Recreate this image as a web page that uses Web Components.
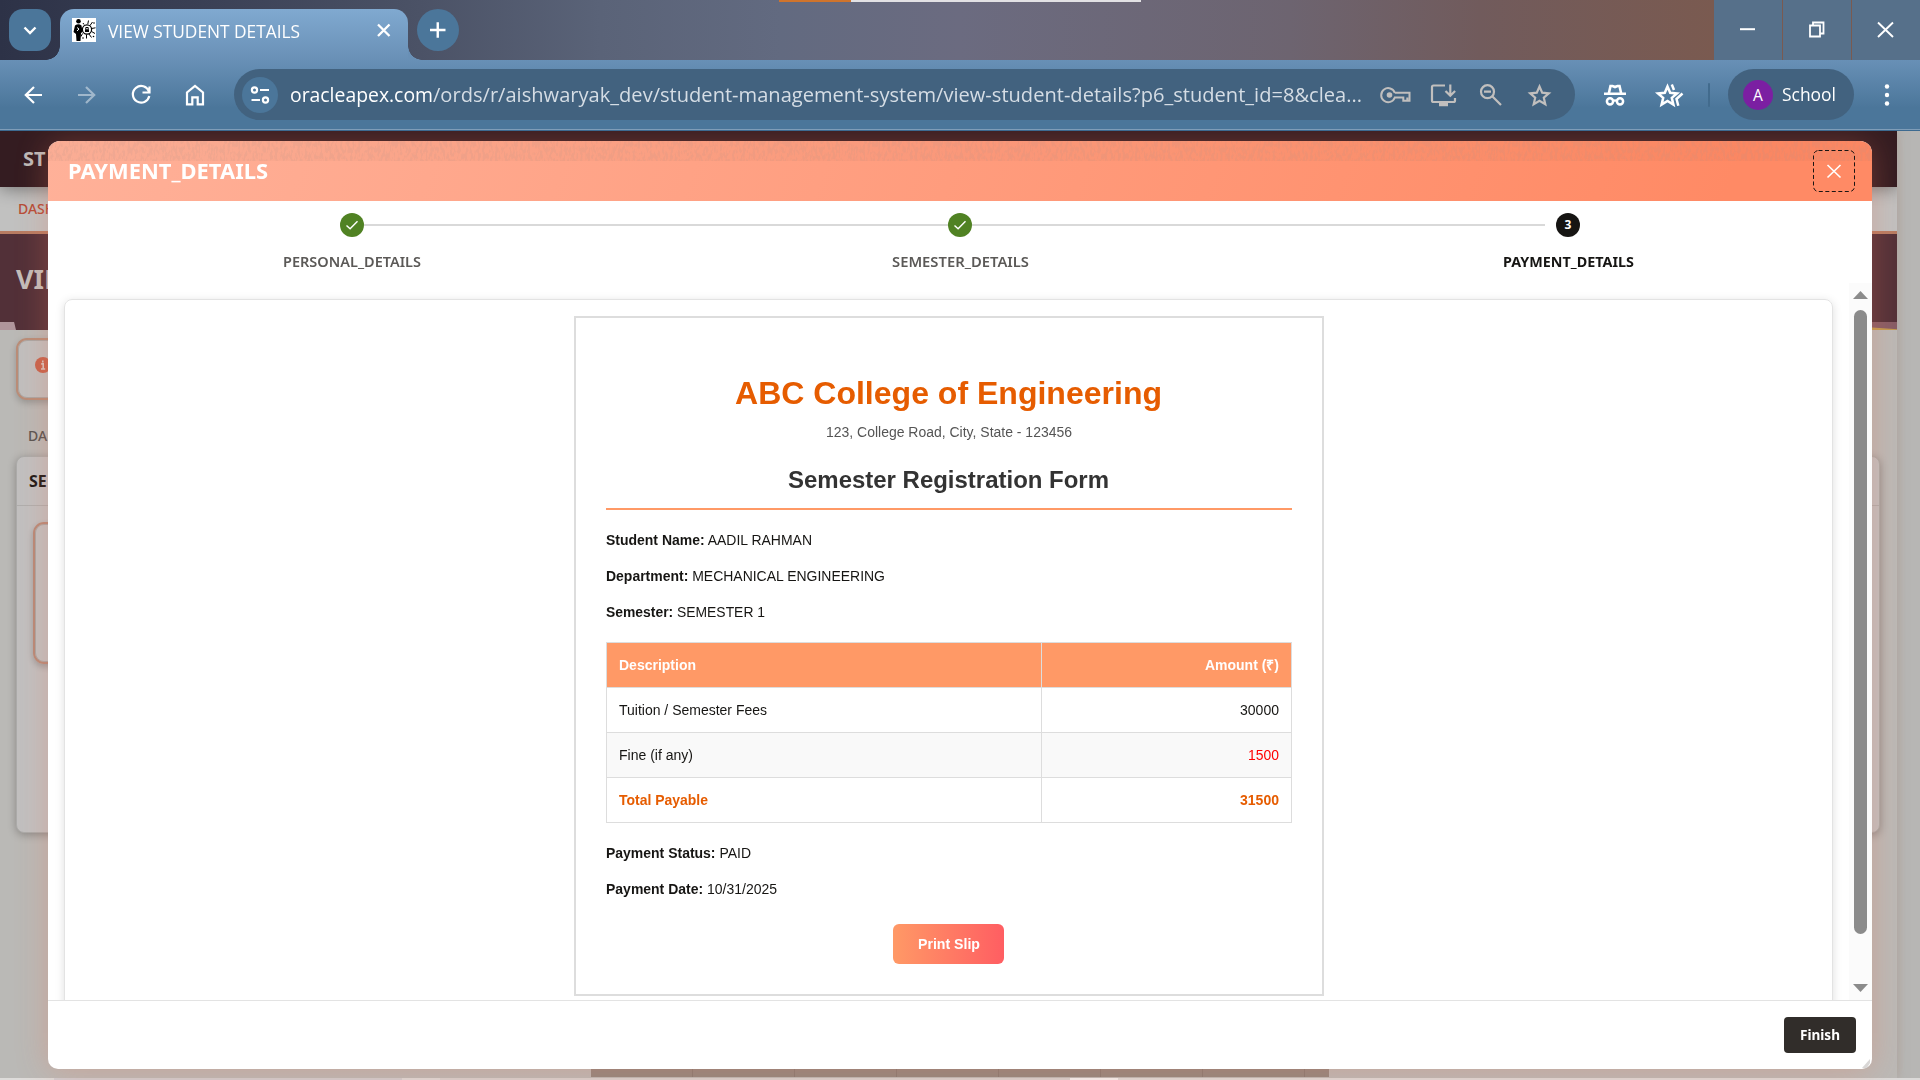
<!DOCTYPE html>
<html lang="en">
<head>
<meta charset="utf-8">
<title>VIEW STUDENT DETAILS</title>
<style>
html,body{margin:0;width:1920px;height:1080px;overflow:hidden;font-family:"Open Sans","Noto Sans",sans-serif}
body{display:flex;flex-direction:column}
</style>
</head>
<body>
<tab-strip label="VIEW STUDENT DETAILS"></tab-strip>
<tool-bar></tool-bar>
<app-page>
  <wizard-dialog slot="dialog" heading="PAYMENT_DETAILS">
    <step-train slot="steps"></step-train>
    <payment-slip></payment-slip>
  </wizard-dialog>
</app-page>
<script>
const define=(name,html,after)=>{
  const t=document.createElement('template');t.innerHTML=html;
  customElements.define(name,class extends HTMLElement{
    connectedCallback(){
      if(this.shadowRoot)return;
      this.attachShadow({mode:'open'}).append(t.content.cloneNode(true));
      if(after)after(this,this.shadowRoot);
    }
  });
};

/* One line of text, condensed or widened to the width in its "w" attribute */
define('fit-text',`<style>:host{display:inline-block;white-space:nowrap;text-align:left}span{display:inline-block;transform-origin:0 50%}</style><span><slot></slot></span>`,(el,r)=>{
  const s=r.querySelector('span'),w=+el.getAttribute('w');
  el.style.width=w+'px';
  const n=s.getBoundingClientRect().width;
  if(n)s.style.transform='scaleX('+(w/n)+')';
});

define('tab-strip',`<style>
:host{display:flex;height:60px;box-sizing:border-box;color:#fff;position:relative;background:linear-gradient(90deg,#2d3247 0,#393f54 190px,#4b5266 420px,#5a6378 600px,#626a80 780px,#6b6b80 960px,#6d6470 1290px,#715b5c 1480px,#7a5a50 1714px)}
.menu{width:42px;height:42px;margin:9px 9px 0 9px;border-radius:14px;background:#4b769a}
.tab{position:relative;width:348px;height:51px;margin-top:9px;border-radius:14px 14px 0 0;background:linear-gradient(#80a9d0,#6990b6);display:flex;box-sizing:border-box;padding:9px 0 0 12px}
.tab:before,.tab:after{content:"";position:absolute;bottom:0;width:14px;height:14px}
.tab:before{left:-14px;background:radial-gradient(circle at 0 0,transparent 13.5px,#6990b6 14px)}
.tab:after{right:-14px;background:radial-gradient(circle at 100% 0,transparent 13.5px,#6990b6 14px)}
fit-text{font-size:18px;line-height:26px;margin-left:12px}
.x{margin-left:76px;margin-top:4px}
.plus{width:42px;height:42px;border-radius:50%;background:#4b769a;margin:9px 0 0 9px}
.win{margin-left:auto;display:flex;gap:1px}
.win div{width:68px;height:60px;background:#56708a}
.win svg{display:block}
.bar{position:absolute;left:779px;top:0;width:362px;height:2px;background:linear-gradient(90deg,#cf742d 72px,#e2e1e4 72px)}
svg{flex:none}
</style>
<div class="menu"><svg width="42" height="42"><path d="M15.5 18.5 21 24l5.500-5.500" fill="none" stroke="#fff" stroke-width="2.400"/></svg></div>
<div class="tab">
<svg width="24" height="24" viewBox="0 0 24 24"><path fill="#fff" d="M0 0h24v24H0z"/><circle cx="6.500" cy="3.300" r="2.300"/><path d="M3 7.500Q6.500 5 9.500 7.500l1 6.500-1.500 1-.5 8H4.500L4 16 1.500 14Z"/><path d="m5 9.500 2 1.500-2 2" stroke="#fff" fill="none"/><circle cx="15" cy="11.500" r="4.600" fill="#fff" stroke="#000" stroke-width="1.200"/><path d="M13 11.200h4v2.800h-4z"/><g fill="none" stroke="#000"><path d="M13.800 11V9.500h2.400V11"/><path d="m11 5 1 1.500m4.500-4-.7 3.500m4.700-2-2.500 3.500m1.500 3 4-.7m-4 3.700 3.500 2m-6 .5 2.500 3.500m-5-3v4m-4-5-1.500 3"/></g><circle cx="11" cy="20" r=".8"/><circle cx="21.500" cy="18.500" r=".8"/><circle cx="22" cy="5" r=".8"/></svg>
<fit-text w="192">VIEW STUDENT DETAILS</fit-text>
<svg class="x" width="20" height="20"><path d="m2 2.500 11.500 11.500m0-11.500L2 14" stroke="#fff" stroke-width="2.300" fill="none"/></svg>
</div>
<div class="plus"><svg width="42" height="42"><path d="M13 21h15.500M20.750 13.300v15.500" stroke="#fff" stroke-width="2.400"/></svg></div>
<div class="win">
<div><svg width="68" height="60"><path d="M26 29.200h15" stroke="#fff" stroke-width="2"/></svg></div>
<div><svg width="68" height="60"><path d="M27 25.500h10v11H27zM30 25v-2.500h10.500v11H37.500" stroke="#fff" stroke-width="1.800" fill="none"/></svg></div>
<div><svg width="68" height="60"><path d="m26 22.500 15 14.500m0-14.500L26 37" stroke="#fff" stroke-width="1.900"/></svg></div>
</div>
<div class="bar"></div>`);

define('tool-bar',`<style>
:host{display:flex;align-items:center;height:71px;box-sizing:border-box;padding:0 0 2px 15px;background:linear-gradient(transparent 69px,#7f9db8 69px,#7f9db8 70px,#3d6a90 70px),linear-gradient(#6890b6,#4b769a 48px);color:#fff}
svg{flex:none;display:block;overflow:visible;fill:none;stroke:#fff;stroke-width:2.200}
.nav{display:flex;gap:18px}
.box{display:flex;align-items:center;margin-left:21px;width:1341px;height:51px;border-radius:26px;background:#42627f;box-sizing:border-box;padding-left:8px}
.site{width:36px;height:36px;border-radius:50%;background:#4b769a;margin-right:12px}
fit-text{font-size:20.800px;line-height:32px;margin-bottom:2px}
.dim{color:#d5dde5}
.box .i{stroke:#c1bfbe}
.acts{display:flex;gap:18px;margin-left:18px}
.ext{display:flex;gap:24px;margin-left:25px}
.sep{width:2px;height:24px;background:#426b8d;margin:0 18px 0 24px;border-radius:1px}
.prof{display:flex;align-items:center;box-sizing:border-box;width:126px;height:51px;border-radius:26px;background:#42627f;padding-left:15px}
.av{width:30px;height:30px;border-radius:50%;background:#7b1fa2;text-align:center;font-size:15.500px;line-height:31px;margin-right:9px}
.prof fit-text{font-size:18px}
</style>
<div class="nav">
<svg width="36" height="36"><path d="M27 18H10.500m8.500-8-8.200 8 8.200 8"/></svg>
<svg width="36" height="36" style="opacity:.45"><path d="M9 18h16.500M17 10l8.200 8-8.200 8"/></svg>
<svg width="36" height="36"><path d="M26 14.500A8.300 8.300 0 1 0 26.300 19M26.500 9.500v6h-7"/></svg>
<svg width="36" height="36"><path d="M10 27.300V15.500L18 9l8 6.500v11.800h-5.300v-7h-5.400v7z"/></svg>
</div>
<div class="box">
<div class="site"><svg width="36" height="36"><circle cx="12.500" cy="13" r="2.600"/><path d="M18 13h9M9.500 23h8.500"/><circle cx="23.500" cy="23" r="2.600"/></svg></div>
<fit-text w="143">oracleapex.com</fit-text><fit-text class="dim" w="929">/ords/r/aishwaryak_dev/student-management-system/view-student-details?p6_student_id=8&amp;clea...</fit-text>
<div class="acts">
<svg class="i" width="36" height="30"><path d="M14.800 12.800H29.500v8h-2.200v-3.300m0 3.300h-4v-3.300h-8.500A7 7 0 1 1 14.800 12.800" stroke-width="2"/><circle cx="9.500" cy="15" r="2.800" fill="#c1bfbe" stroke="none"/></svg>
<svg class="i" width="30" height="30" style="margin-left:-6px"><path d="M17 5.500H5.500Q4 5.500 4 7v13.500q0 1.500 1.500 1.500h20q1.500 0 1.500-1.500V18M22.300 4.500v11m-4.800-4.500 4.800 4.800 4.800-4.800"/><path d="M11 24.500h9" stroke-width="3.500"/></svg>
<svg class="i" width="30" height="30"><circle cx="11.500" cy="11.700" r="6.500"/><path d="m16.500 16.500 8.500 8.500M8 11.700h7"/></svg>
<svg class="i" width="30" height="30"><path d="m15.500 6.500 2.700 6.200 6.600.6-5 4.400 1.500 6.600-5.800-3.500-5.800 3.500 1.500-6.600-5-4.400 6.600-.6z"/></svg>
</div></div>
<div class="ext">
<svg width="30" height="30"><path d="M4 13.800h22M8.800 13.500 10.500 6h2l2.500 1 2.500-1h2l1.700 7.500" stroke-width="2.600"/><circle cx="10" cy="21.300" r="3.100" stroke-width="2.500"/><circle cx="20" cy="21.300" r="3.100" stroke-width="2.500"/><path d="M13 21q2-1.300 4 0"/></svg>
<svg width="30" height="30"><path d="m13.500 6.500 2.700 6.300 6.800.6-5.200 4.500 1.600 6.700-5.900-3.600-5.900 3.600 1.600-6.700L4 13.400l6.800-.6zM17.800 4.500l2.200 5.500M28.500 13.500 22.500 19l1.800 6.800" stroke-width="2.500"/></svg>
</div>
<div class="sep"></div>
<div class="prof"><div class="av">A</div><fit-text w="54">School</fit-text></div>
<svg width="36" height="36" style="margin-left:16px"><g fill="#fff" stroke="none"><circle cx="17" cy="9.500" r="2.200"/><circle cx="17" cy="18" r="2.200"/><circle cx="17" cy="26.500" r="2.200"/></g></svg>`);

define('app-page',`<style>
:host{display:block;position:relative;flex:1;overflow:hidden;background:#b7b6b4}
.view{width:1897px;height:947px;background:linear-gradient(90deg,#bab9b6,#bbb9b6);box-shadow:2px 0 8px #a99b8f80;overflow:hidden;display:flex;flex-direction:column}
header{height:56px;background:#341c21;color:#bdb9b8;font:700 20px/56px "Noto Sans",sans-serif;padding-left:23px;flex:none;box-shadow:0 2px 16px #0006;position:relative}
nav{height:44px;background:#c1c1c0;border-bottom:3px solid #b87c62;color:#b74d38;font:500 14px/44px "Noto Sans",sans-serif;padding-left:18px;flex:none}
.hero{height:96px;flex:none;background:#523038;color:#c3bdba;font:700 27px/89px "Noto Sans",sans-serif;padding-left:16px;position:relative}
.hero i{position:absolute;bottom:0;left:0;width:16px;height:8px;background:#b0959b;clip-path:polygon(0 0,88% 0,100% 100%,0 100%)}
.hero b{position:absolute;bottom:0;right:0;width:32px;height:8px;background:linear-gradient(4deg,#c09a4e 2.500px,#865c65 3.500px)}
.note{margin:8px 0 0 16px;width:1800px;height:58px;border:2px solid #b98d78;border-right:0;border-radius:11px;box-shadow:inset 0 0 0 1px #aaa6a3,0 3px 7px #0003;background:#c1bfbe;flex:none;box-sizing:content-box}
.crumb{font:500 14px/20px "Noto Sans",sans-serif;color:#575452;margin:26px 0 0 28px;flex:none}
.card{margin:10px 0 0 16px;width:1864px;height:377px;flex:none;border:1px solid #ababa9;border-radius:8px;background:#c1c0c0;box-shadow:0 2px 8px #0004;box-sizing:border-box}
.card h3{margin:0;height:48px;border-bottom:1px solid #afaead;font:700 16px/48px "Noto Sans",sans-serif;color:#1c1917;padding-left:12px}
.inner{margin:16px 0 0 16px;width:300px;height:124px;border:2px solid #b88a78;border-radius:11px;box-shadow:inset 0 0 0 1px #aaa5a3,0 3px 6px #0003;height:124px}
.grid{margin:235px 0 0 591px;width:738px;height:9px;flex:none;background:repeating-linear-gradient(90deg,transparent 0 101px,#857b74 101px 102px),#91877f}
.status{height:2px;background:linear-gradient(90deg,#dedcda 54px,#cfcdd0 54px 402px,#dcdad9 402px 440px,#d5d1d0 440px 1070px,#f3f2f2 1070px 1118px,#dcdad9 1118px)}
::slotted(*){position:absolute;left:48px;top:10px}
</style>
<div class="view"><header>ST</header><nav>DASH</nav><div class="hero">VIE<i></i><b></b></div>
<div class="note"><svg width="16" height="16" viewBox="0 0 16 16" style="display:block;margin:17px 0 0 17px"><circle cx="8" cy="8" r="8" fill="#c7644d"/><path d="M6.200 6.900h2V12M6 12h4.200M7.800 3.500v2" stroke="#d6c4be" stroke-width="1.600" fill="none"/></svg></div>
<div class="crumb">DA</div>
<div class="card"><h3>SE</h3><div class="inner" style="height:138px"></div></div>
<div class="grid"></div></div><div class="status"></div>
<slot name="dialog"></slot>`);

define('wizard-dialog',`<style>
:host{display:flex;flex-direction:column;width:1824px;height:928px;border-radius:12px 12px 10px 10px;background:#fff;box-shadow:0 2px 32px rgba(232,118,88,.32)}
header{position:relative;display:flex;align-items:center;height:60px;flex:none;border-radius:12px 12px 0 0;background:linear-gradient(110deg,#ffb199,#ff8a65 92%);overflow:hidden;color:#fff;box-sizing:border-box;padding:0 17px 0 20px}
header>svg{position:absolute;left:0;top:0}
.title{position:relative;top:-.5px;font:700 21px/30px "Noto Sans",sans-serif}
header .close{position:relative;margin-left:auto;display:block}
.body{flex:1;min-height:0;display:flex;overflow:hidden}
.scroll{flex:1;min-width:0;overflow:hidden;padding:16px 16px 0 16px}
.panel{box-sizing:border-box;height:720px;border:1px solid #e3e3e3;border-radius:8px;box-shadow:0 2px 10px #0002;padding-top:16px;display:flex;justify-content:center;align-items:flex-start}
.bar{width:23px;background:#fbfbfb}
.bar svg{display:block}
footer{position:relative;height:69px;flex:none;border-top:1px solid #e3e3e3;box-sizing:border-box;display:flex;justify-content:flex-end;padding:16px 16px 0 0}
button{width:72px;height:36px;border:0;border-radius:4px;background:#312d2a;color:#fff;font:700 14px/35px "Noto Sans",sans-serif;padding:0 0 1px}
.grip{position:absolute;right:2px;bottom:1px;width:8px;height:9px;background:#d9d7d6;clip-path:polygon(100% 0,100% 45%,60% 100%,0 100%)}
</style>
<header><svg width="1824" height="20"><defs><filter id="grain" x="0" y="0" width="100%" height="100%"><feTurbulence type="fractalNoise" baseFrequency=".4 .16" numOctaves="2" seed="8"/><feColorMatrix values="0 0 0 0 .45  0 0 0 0 .3  0 0 0 0 .25  7 0 0 0 -3.200"/></filter></defs><path fill="#804030" opacity=".04" d="M0 0h1824v20H0z"/><g opacity=".13"><rect width="1824" height="20" filter="url(#grain)"/></g></svg>
<fit-text class="title" w="200"></fit-text>
<svg class="close" width="42" height="42"><rect x=".5" y=".5" width="41" height="41" rx="5" fill="none" stroke="#1b1513" stroke-dasharray="4 2.500"/><path d="m14.500 15 13 12.500m0-12.500-13 12.500" stroke="#fff" stroke-width="1.600"/></svg></header>
<slot name="steps"></slot>
<div class="body"><div class="scroll"><div class="panel"><slot></slot></div></div>
<div class="bar"><svg width="23" height="716"><g fill="#8b8b8b"><path d="m11.500 8 7.500 8H4zM4 701h15l-7.500 8z"/><rect x="5" y="27" width="13" height="624" rx="6.500"/></g></svg></div></div>
<footer><button><fit-text w="40">Finish</fit-text></button><i class="grip"></i></footer>`,(el,r)=>{
  const old=r.querySelector('.title'),n=old.cloneNode();
  n.textContent=el.getAttribute('heading');old.replaceWith(n);
});

define('step-train',`<style>
:host{display:grid;grid-template-columns:repeat(3,608px);height:82px;flex:none;padding-top:12px;box-sizing:border-box;background:#fff}
.s{display:flex;flex-direction:column;align-items:center;position:relative;font:600 14px/20px "Noto Sans",sans-serif;color:#5b5957}
.s svg{display:block;margin-bottom:15px}
.s:not(:last-child):after{content:"";position:absolute;left:316px;top:11px;height:2px;width:584px;background:#d9d9d9}
.s.before-last:after{width:573px!important}
.on{color:#161513;font-weight:700}
.n{width:24px;height:24px;border-radius:50%;background:#161513;color:#fff;text-align:center;font:700 12px/24px "Noto Sans",sans-serif;margin-bottom:15px}
</style>
<div class="s"><svg width="24" height="24"><circle cx="12" cy="12" r="12" fill="#508223"/><path d="m6.500 12.500 3.600 3.300 7.400-7.600" stroke="#fff" stroke-width="1.400" fill="none"/></svg><fit-text w="138">PERSONAL_DETAILS</fit-text></div>
<div class="s before-last"><svg width="24" height="24"><circle cx="12" cy="12" r="12" fill="#508223"/><path d="m6.500 12.500 3.600 3.300 7.400-7.600" stroke="#fff" stroke-width="1.400" fill="none"/></svg><fit-text w="137">SEMESTER_DETAILS</fit-text></div>
<div class="s on"><div class="n">3</div><fit-text w="131">PAYMENT_DETAILS</fit-text></div>`);

define('payment-slip',`<style>
:host{display:block;box-sizing:border-box;width:750px;height:680px;border:2px solid #ddd;padding:52px 30px 0;font:14px/20px "Liberation Sans",Arial,sans-serif;color:#161513;text-align:center}
h1{margin:0;font-size:32px;line-height:46px;color:#e65c00}
.addr{color:#555;line-height:20px;margin-top:6px}
h2{margin:20px 0 0;font-size:24px;line-height:36px;color:#333;padding-bottom:10px;border-bottom:2px solid #ff9966}
p{margin:0;height:20px;text-align:left}
.info{display:grid;gap:16px;margin-top:20px}
table{width:686px;margin-top:20px;border-collapse:collapse;table-layout:fixed}
th,td{border:1px solid #ddd;height:44px;padding:0 12px;text-align:left}
th{background:#ff9966;color:#fff}
tr>:last-child{text-align:right;width:225px}
.alt td{background:#f9f9f9}
.red{color:#f00}
.tot td{color:#e65c00;font-weight:700}
button{display:block;margin:25px auto 0;width:111px;height:40px;border:0;border-radius:6px;background:linear-gradient(90deg,#ff9966,#ff5e62);color:#fff;font:700 14px "Liberation Sans",Arial,sans-serif;padding:0}
</style>
<h1><fit-text w="427">ABC College of Engineering</fit-text></h1>
<div class="addr"><fit-text w="246">123, College Road, City, State - 123456</fit-text></div>
<h2><fit-text w="321">Semester Registration Form</fit-text></h2>
<div class="info"><p><fit-text w="206"><b>Student Name:</b> AADIL RAHMAN</fit-text></p><p><fit-text w="279"><b>Department:</b> MECHANICAL ENGINEERING</fit-text></p><p><fit-text w="159"><b>Semester:</b> SEMESTER 1</fit-text></p></div>
<table><tr><th><fit-text w="77">Description</fit-text></th><th><fit-text w="74">Amount (₹)</fit-text></th></tr>
<tr><td><fit-text w="148">Tuition / Semester Fees</fit-text></td><td><fit-text w="39">30000</fit-text></td></tr>
<tr class="alt"><td><fit-text w="74">Fine (if any)</fit-text></td><td class="red"><fit-text w="31">1500</fit-text></td></tr>
<tr class="tot"><td><fit-text w="89">Total Payable</fit-text></td><td><fit-text w="39">31500</fit-text></td></tr></table>
<div class="info"><p><fit-text w="145"><b>Payment Status:</b> PAID</fit-text></p><p><fit-text w="171"><b>Payment Date:</b> 10/31/2025</fit-text></p></div>
<button><fit-text w="62">Print Slip</fit-text></button>`);
</script>
</body>
</html>
